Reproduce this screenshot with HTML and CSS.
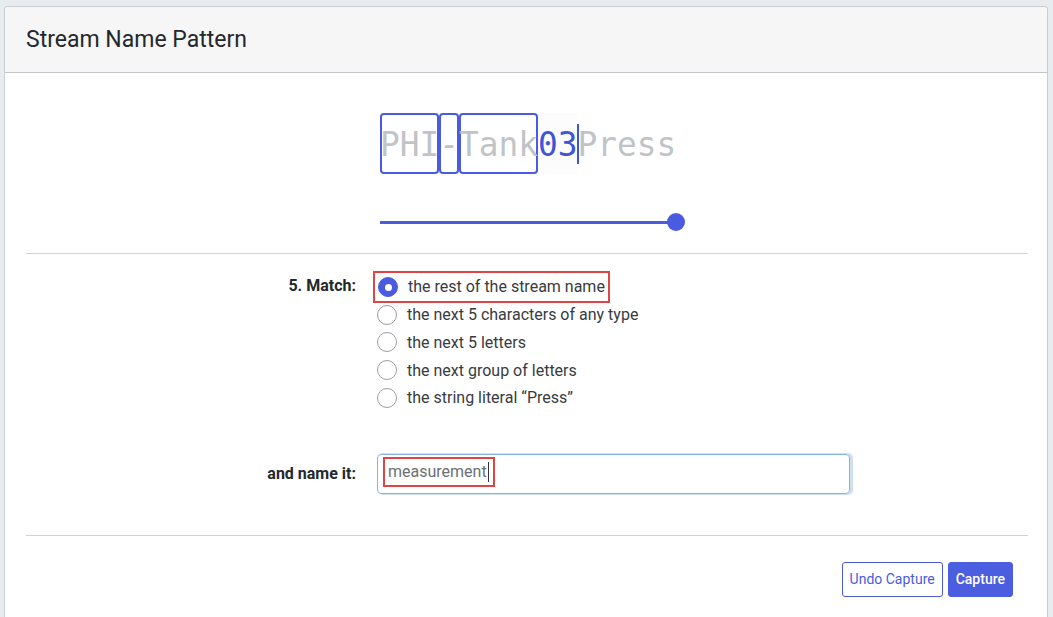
FILE: index.html
```html
<!DOCTYPE html>
<html>
<head>
<meta charset="utf-8">
<link rel="stylesheet" href="styles.css">
</head>
<body>
<div class="card">
  <div class="card-header">Stream Name Pattern</div>
  <div class="card-body">
    <div class="pattern-wrap">
      <div class="pattern">
        <div class="pattern-text"><span class="seg boxed">PHI</span><span class="seg boxed">-</span><span class="seg boxed">Tank</span><span class="seg active">03</span><span class="cursor"></span><span class="seg rest">Press</span></div>
        <div class="slider"><div class="thumb"></div></div>
      </div>
    </div>
    <hr class="divider">
    <div class="form-row match-row">
      <div class="label">5. Match:</div>
      <div class="options">
        <label class="option selected"><span class="radio checked"></span><span>the rest of the stream name</span></label>
        <label class="option"><span class="radio"></span><span>the next 5 characters of any type</span></label>
        <label class="option"><span class="radio"></span><span>the next 5 letters</span></label>
        <label class="option"><span class="radio"></span><span>the next group of letters</span></label>
        <label class="option"><span class="radio"></span><span>the string literal “Press”</span></label>
      </div>
    </div>
    <div class="form-row name-row">
      <div class="label">and name it:</div>
      <div class="input"><span class="input-val">measurement<span class="caret"></span></span></div>
    </div>
    <hr class="divider bottom">
    <div class="actions">
      <button class="btn btn-outline">Undo Capture</button>
      <button class="btn btn-primary">Capture</button>
    </div>
  </div>
</div>
</body>
</html>
```
FILE: styles.css
```css
html, body {
  margin: 0;
  padding: 0;
  background: #e9ecef;
  font-family: Roboto, "Liberation Sans", sans-serif;
  color: #212529;
}
.card {
  margin: 6px 5px 0 4px;
  background: #fff;
  border: 1px solid #c9cdd1;
  border-bottom: none;
  border-radius: 4px 4px 0 0;
  height: 620px;
  box-sizing: border-box;
}
.card-header {
  height: 66px;
  box-sizing: border-box;
  background: #f6f6f6;
  border-bottom: 1px solid #c4c8cc;
  border-radius: 4px 4px 0 0;
  padding: 0 21px;
  font-size: 23px;
  line-height: 66px;
  color: #23282d;
}
.card-body {
  padding: 40px 19px 0 21px;
}
.pattern-wrap {
  display: flex;
  justify-content: center;
}
.pattern {
  width: 296px;
  padding-left: 2px;
}
.pattern-text {
  display: flex;
  font-family: "DejaVu Sans Mono", monospace;
  font-size: 32.8px;
  height: 61px;
  line-height: 64px;
  color: #c0c4c8;
  white-space: pre;
}
.seg {
  height: 61px;
}
.seg.boxed {
  box-shadow: inset 0 0 0 2px #4a5be0;
  border-radius: 4px;
}
.seg.active {
  color: #3f55d9;
  background: #fcfcfd;
}
.cursor {
  flex: none;
  width: 2px;
  height: 40px;
  margin-top: 11px;
  background: #3f55d9;
  margin-right: -2px;
}
.slider {
  position: relative;
  margin-top: 47px;
  height: 3px;
  background: #4a5be0;
  width: 297px;
}
.thumb {
  position: absolute;
  left: 287px;
  top: -8px;
  width: 18px;
  height: 18px;
  border-radius: 50%;
  background: #4a5be0;
}
.divider {
  border: none;
  border-top: 1px solid #cfd3d6;
  margin: 29px 0 0 0;
}
.form-row {
  display: grid;
  grid-template-columns: 330px 473px;
  column-gap: 21px;
}
.label {
  text-align: right;
  font-weight: bold;
  font-size: 16px;
  color: #23282d;
}
.match-row {
  padding-top: 19px;
}
.match-row .label {
  line-height: 26px;
}
.options {
  display: flex;
  flex-direction: column;
}
.option {
  display: flex;
  align-items: center;
  height: 27.75px;
  font-size: 16px;
  color: #383c40;
}
.option.selected {
  align-self: flex-start;
  outline: 2px solid #e04444;
  outline-offset: 0;
  margin-left: -2px;
  padding: 0 3px 0 3px;
}
.radio {
  width: 18px;
  height: 18px;
  border: 1px solid #9a9ea3;
  border-radius: 50%;
  margin-right: 10px;
  box-sizing: content-box;
  flex: none;
}
.radio.checked {
  border-color: #4a5be0;
  background: #4a5be0;
  position: relative;
}
.radio.checked::after {
  content: "";
  position: absolute;
  left: 6px;
  top: 6px;
  width: 7px;
  height: 7px;
  border-radius: 50%;
  background: #fff;
}
.name-row {
  margin-top: 42px;
  align-items: center;
}
.input {
  height: 40px;
  box-sizing: border-box;
  border: 1px solid #86b5e0;
  border-radius: 4px;
  box-shadow: 2px 0 0 1px #cde0f0;
  padding: 0 5px 4px;
  display: flex;
  align-items: center;
}
.input-val {
  border: 2px solid #e04444;
  height: 30px;
  box-sizing: border-box;
  padding: 0 4px 0 3px;
  font-size: 16px;
  color: #6b6f74;
  display: flex;
  align-items: center;
}
.caret {
  width: 1px;
  height: 20px;
  background: #333;
  margin-left: 1px;
}
.divider.bottom {
  margin-top: 41px;
}
.actions {
  display: flex;
  justify-content: flex-end;
  gap: 5px;
  margin-top: 26px;
  padding-right: 15px;
}
.btn {
  height: 35px;
  font-family: Roboto, "Liberation Sans", sans-serif;
  font-size: 14px;
  border-radius: 3px;
  padding: 0 7px;
  white-space: nowrap;
  cursor: pointer;
}
.btn-outline {
  background: #fff;
  border: 1px solid #4a5be0;
  color: #4a5be0;
}
.btn-primary {
  background: #4b5ee0;
  border: 1px solid #4b5ee0;
  color: #fff;
  font-weight: 500;
}
```
